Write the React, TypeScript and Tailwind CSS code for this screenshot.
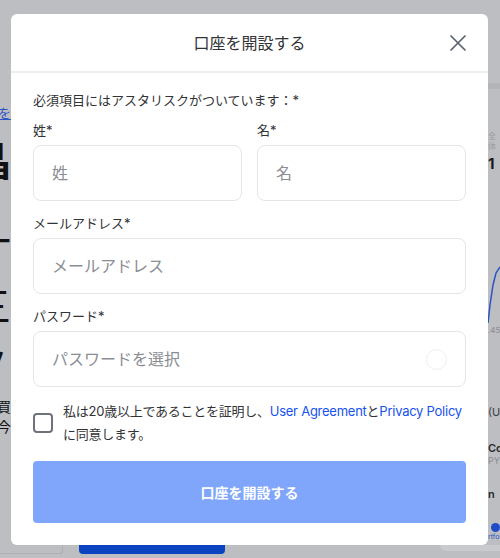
import { useState } from 'react';

const font = { fontFamily: 'Inter, "Noto Sans CJK JP", sans-serif' };

function Field({ placeholder, type = 'text', trailing }: { placeholder: string; type?: string; trailing?: boolean }) {
  return (
    <div className="flex h-[56px] items-center rounded-lg border border-[#e3e5e9] bg-white px-[18px]">
      <input
        type={type}
        placeholder={placeholder}
        className="w-full bg-transparent text-[16px] text-[#0a0b0d] outline-none placeholder:text-[#8a8d93]"
        style={font}
      />
      {trailing && <span className="ml-2 h-[21px] w-[21px] shrink-0 rounded-full border border-[#eceef1]" />}
    </div>
  );
}

export default function App() {
  const [agreed, setAgreed] = useState(false);

  return (
    <div className="relative h-[558px] w-[500px] overflow-hidden bg-[#bdbec2]" style={font}>
      {/* dimmed page behind the dialog */}
      <div className="flex h-full flex-col">
        <div className="flex flex-1">
          <div className="flex w-[11px] flex-col items-end overflow-hidden pt-[104px] text-[#111]">
            <span className="text-[13px] leading-[18px] text-[#2f55c5] underline">を</span>
            <span className="mt-[20px] text-[40px] font-bold leading-[40px]">晶</span>
            <span className="mt-[40px] text-[40px] leading-[40px]">一</span>
            <span className="mt-[25px] text-[40px] leading-[40px]">三</span>
            <span className="mt-[20px] text-[40px] leading-[40px]">ノ</span>
            <span className="mt-[10px] text-[14px] leading-[20px]">買</span>
            <span className="text-[14px] leading-[20px]">今</span>
          </div>
          <div className="flex-1" />
          <div className="flex w-[12px] flex-col overflow-hidden">
            <div className="mt-[83px] h-[6px] bg-[#b3b4b8]" />
            <span className="mt-[42px] text-[8px] leading-[10px] text-[#9a9ba0]">全体</span>
            <span className="mt-[4px] text-[15px] font-bold leading-[18px] text-[#1a1a1a]">1</span>
            <svg width="12" height="60" viewBox="0 0 12 60" className="mt-[92px]">
              <path d="M0 58 L2 40 L5 20 L8 8 L12 2" fill="none" stroke="#2b55c4" strokeWidth="1.5" />
            </svg>
            <span className="text-[8px] leading-[10px] text-[#8a8b90]">.45</span>
            <span className="mt-[70px] text-[11px] leading-[14px] text-[#3a3b3f]">(US</span>
            <span className="mt-[22px] text-[11px] font-semibold leading-[14px] text-[#2a2b2f]">Coin</span>
            <span className="text-[9px] leading-[12px] text-[#8a8b90]">PY</span>
            <span className="mt-[20px] text-[11px] font-semibold leading-[14px] text-[#2a2b2f]">n</span>
            <span className="mt-[22px] ml-[3px] h-[9px] w-[9px] rounded-full bg-[#1d4cc6]" />
            <span className="text-[7px] leading-[10px] text-[#2b55c4]">rtfolio</span>
          </div>
        </div>
        <div className="flex h-[13px]">
          <div className="h-[9px] w-[63px] rounded-br-[3px] border-b border-r border-[#aeafb3]" />
          <div className="ml-[16px] h-[9px] w-[146px] rounded-b-[4px] bg-[#0b43c0]" />
          <div className="flex-1" />
          <div className="h-[6px] w-[60px] rounded-bl-[16px] bg-[#c9cacd]" />
        </div>
      </div>

      {/* dialog */}
      <div className="absolute left-[11px] top-[14px] w-[477px] rounded-md bg-white">
        <div className="relative flex h-[59px] items-center justify-center border-b-2 border-[#eceef1]">
          <h2 className="text-[16px] text-[#323336]">口座を開設する</h2>
          <button className="absolute right-[22px] top-[21px] p-0">
            <svg width="16" height="16" viewBox="0 0 16 16">
              <path d="M1 1 L15 15 M15 1 L1 15" stroke="#5b616e" strokeWidth="1.7" strokeLinecap="round" />
            </svg>
          </button>
        </div>

        <div className="flex flex-col px-[22px] pb-[22px] pt-[17px] text-[#323336]">
          <p className="text-[13px] leading-[20px]">必須項目にはアスタリスクがついています：*</p>

          <div className="mt-[10px] grid grid-cols-2 gap-[15px]">
            <div className="flex flex-col gap-[5px]">
              <label className="text-[13px] leading-[20px]">姓*</label>
              <Field placeholder="姓" />
            </div>
            <div className="flex flex-col gap-[5px]">
              <label className="text-[13px] leading-[20px]">名*</label>
              <Field placeholder="名" />
            </div>
          </div>

          <label className="mt-[12px] text-[13px] leading-[20px]">メールアドレス*</label>
          <div className="mt-[5px]">
            <Field placeholder="メールアドレス" type="email" />
          </div>

          <label className="mt-[12px] text-[13px] leading-[20px]">パスワード*</label>
          <div className="mt-[5px]">
            <Field placeholder="パスワードを選択" type="password" trailing />
          </div>

          <div className="mt-[13px] flex items-center gap-[10px]">
            <button
              onClick={() => setAgreed(!agreed)}
              className={`h-[20px] w-[20px] shrink-0 rounded-[4px] border-2 ${agreed ? 'border-[#1652f0] bg-[#1652f0]' : 'border-[#6f7379] bg-white'}`}
            />
            <p className="text-[13px] leading-[23px] tracking-[-0.25px] text-[#323336]">
              私は20歳以上であることを証明し、<a className="text-[#1652f0]">User Agreement</a>と<a className="text-[#1652f0]">Privacy Policy</a>
              <br />
              に同意します。
            </p>
          </div>

          <button className="mt-[15px] h-[62px] rounded-[4px] bg-[#7fa6fb] text-[14px] font-semibold text-white">
            口座を開設する
          </button>
        </div>
      </div>
    </div>
  );
}
